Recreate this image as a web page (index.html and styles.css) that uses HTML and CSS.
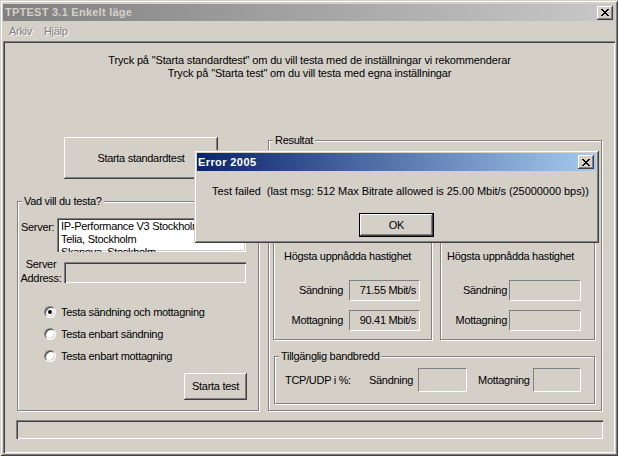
FILE: index.html
```html
<!DOCTYPE html>
<html lang="sv">
<head>
<meta charset="utf-8">
<title>TPTEST 3.1 Enkelt läge</title>
<link rel="stylesheet" href="styles.css">
</head>
<body>
<div class="window">
  <div class="titlebar inactive">
    <span class="title">TPTEST 3.1 Enkelt läge</span>
    <span class="capbtn"><svg width="8" height="7" viewBox="0 0 8 7" shape-rendering="crispEdges"><path fill="#000" d="M0 0h2v1H0zM6 0h2v1H6zM1 1h2v1H1zM5 1h2v1H5zM2 2h4v1H2zM3 3h2v1H3zM2 4h4v1H2zM1 5h2v1H1zM5 5h2v1H5zM0 6h2v1H0zM6 6h2v1H6z"/></svg></span>
  </div>
  <div class="menubar">
    <span class="menu">Arkiv</span>
    <span class="menu">Hjälp</span>
  </div>
  <div class="client">
    <div class="intro">
      <p>Tryck på "Starta standardtest" om du vill testa med de inställningar vi rekommenderar</p>
      <p>Tryck på "Starta test" om du vill testa med egna inställningar</p>
    </div>
    <div class="main">
      <div class="leftcol">
        <button class="btn btn-std">Starta standardtest</button>
        <fieldset class="group group-test">
          <legend>Vad vill du testa?</legend>
          <div class="server-row">
            <span class="server-label">Server:</span>
            <div class="listbox">
              <div class="item">IP-Performance V3 Stockholm</div>
              <div class="item">Telia, Stockholm</div>
              <div class="item">Skanova, Stockholm</div>
            </div>
          </div>
          <div class="addr-row">
            <span class="addr-label">Server<br>Address:</span>
            <div class="field field-addr"></div>
          </div>
          <div class="radios">
            <div class="radio"><span class="circle checked"></span><span>Testa sändning och mottagning</span></div>
            <div class="radio"><span class="circle"></span><span>Testa enbart sändning</span></div>
            <div class="radio"><span class="circle"></span><span>Testa enbart mottagning</span></div>
          </div>
          <div class="btnrow"><button class="btn btn-test">Starta test</button></div>
        </fieldset>
      </div>
      <fieldset class="group group-result">
        <legend>Resultat</legend>
        <div class="subgroups">
          <div class="subgroup sub-a">
            <div class="subhead">Högsta uppnådda hastighet</div>
            <div class="valrow"><span class="lbl">Sändning</span><span class="valbox">71.55 Mbit/s</span></div>
            <div class="valrow row2"><span class="lbl">Mottagning</span><span class="valbox">90.41 Mbit/s</span></div>
          </div>
          <div class="subgroup sub-b">
            <div class="subhead">Högsta uppnådda hastighet</div>
            <div class="valrow"><span class="lbl">Sändning</span><span class="valbox"></span></div>
            <div class="valrow row2"><span class="lbl">Mottagning</span><span class="valbox"></span></div>
          </div>
        </div>
        <fieldset class="group group-bw">
          <legend>Tillgänglig bandbredd</legend>
          <div class="bwrow">
            <span class="tcp">TCP/UDP i %:</span>
            <span class="bwlbl">Sändning</span>
            <span class="bwbox"></span>
            <span class="bwlbl bw-mot">Mottagning</span>
            <span class="bwbox bwbox-mot"></span>
          </div>
        </fieldset>
      </fieldset>
    </div>
    <div class="statusbar"></div>
  </div>
</div>

<div class="dialog">
  <div class="dlg-title">
    <span class="dlg-caption">Error 2005</span>
    <span class="capbtn"><svg width="8" height="7" viewBox="0 0 8 7" shape-rendering="crispEdges"><path fill="#000" d="M0 0h2v1H0zM6 0h2v1H6zM1 1h2v1H1zM5 1h2v1H5zM2 2h4v1H2zM3 3h2v1H3zM2 4h4v1H2zM1 5h2v1H1zM5 5h2v1H5zM0 6h2v1H0zM6 6h2v1H6z"/></svg></span>
  </div>
  <p class="dlg-text">Test failed&nbsp; (last msg: 512 Max Bitrate allowed is 25.00 Mbit/s (25000000 bps))</p>
  <div class="dlg-btns"><button class="btn btn-ok">OK</button></div>
</div>
</body>
</html>
```

FILE: styles.css
```css
* { box-sizing: border-box; }
html, body { margin: 0; padding: 0; }
body {
  width: 618px; height: 456px; overflow: hidden; position: relative;
  background: #d4d0c8; color: #000;
  font-family: "Liberation Sans", Arial, sans-serif;
  font-size: 11px; letter-spacing: -0.3px; line-height: 13px;
}
p { margin: 0; }

.window {
  width: 618px; height: 456px; padding: 4px 3px 3px 3px;
  display: flex; flex-direction: column; background: #d4d0c8;
  box-shadow: inset 1px 1px #d4d0c8, inset -1px -1px #404040, inset 2px 2px #fff, inset -2px -2px #808080;
}
.titlebar {
  height: 17px; flex: none; display: flex; align-items: center; justify-content: space-between;
  padding: 0 2px 0 2px;
}
.titlebar.inactive { background: linear-gradient(to right, #808080, #c8c8c8); color: #d4d0c8; }
.title { font-weight: bold; letter-spacing: 0.25px; }
.capbtn {
  width: 16px; height: 14px; background: #d4d0c8; display: flex; align-items: center; justify-content: center;
  box-shadow: inset -1px -1px #404040, inset 1px 1px #fff, inset -2px -2px #808080, inset 2px 2px #d4d0c8;
}
.menubar { height: 20px; flex: none; display: flex; align-items: center; padding-left: 0; }
.menu { padding: 0 6px; color: #808080; text-shadow: 1px 1px #fff; }

.client {
  flex: 1; padding: 13px 12px 0 13px;
  box-shadow: inset 1px 1px #808080, inset 2px 2px #404040, inset -1px -1px #fff, inset -2px -2px #d4d0c8;
}
.intro { text-align: center; letter-spacing: -0.15px; }

.main { display: flex; margin-top: 54px; height: 277px; }
.leftcol { width: 244px; display: flex; flex-direction: column; align-items: flex-start; }

.btn {
  font: inherit; letter-spacing: inherit; color: #000; background: #d4d0c8; border: 0; padding: 0;
  box-shadow: inset -1px -1px #404040, inset 1px 1px #fff, inset -2px -2px #808080, inset 2px 2px #d4d0c8;
}
.btn-std { margin: 3px 0 0 48px; width: 154px; height: 42px; }
.btn-test { width: 63px; height: 27px; }

.group {
  margin: 0; padding: 0; min-width: 0;
  border: 1px solid #808080;
  box-shadow: inset 1px 1px #fff, 1px 1px #fff;
}
.group > legend {
  margin-left: 4px; padding: 0 2px; background: #d4d0c8; line-height: 13px;
}
.group-test { margin: 16px 0 0 1px; width: 242px; height: 216px; }

.server-row { display: flex; align-items: flex-start; margin-top: 10px; padding-left: 3px; }
.server-label { width: 36px; margin-top: 3px; }
.listbox {
  width: 189px; height: 34px; background: #fff; overflow: hidden; padding: 2px 0 0 4px;
  box-shadow: inset 1px 1px #808080, inset 2px 2px #404040, inset -1px -1px #fff, inset -2px -2px #d4d0c8;
}
.item { white-space: nowrap; line-height: 13px; }

.addr-row { display: flex; align-items: flex-start; margin-top: 10px; }
.addr-label { width: 46px; text-align: center; line-height: 14px; margin-top: -5px; }
.field {
  background: #d4d0c8;
  box-shadow: inset 1px 1px #808080, inset 2px 2px #404040, inset -1px -1px #fff, inset -2px -2px #d4d0c8;
}
.field-addr { width: 182px; height: 21px; }

.radios { margin-top: 16px; }
.radio { display: flex; align-items: center; height: 22px; padding-left: 26px; }
.circle {
  width: 12px; height: 12px; border-radius: 50%; margin-right: 5px; position: relative;
  background: #fff; border: 1px solid; border-color: #808080 #fff #fff #808080;
  box-shadow: inset 1px 1px #404040, inset -1px -1px #d4d0c8;
}
.circle.checked::after {
  content: ""; position: absolute; left: 3px; top: 3px; width: 4px; height: 4px; border-radius: 50%; background: #000;
}
.btnrow { display: flex; justify-content: flex-end; margin-top: 6px; padding-right: 11px; }

.group-result { margin-left: 8px; width: 334px; height: 277px; }
.subgroups { display: flex; gap: 8px; margin: 12px 0 0 4px; }
.subgroup {
  height: 181px; border: 1px solid #808080;
  box-shadow: inset 1px 1px #fff, 1px 1px #fff;
}
.sub-a { width: 159px; }
.sub-b { width: 155px; }
.subhead { margin-top: 90px; white-space: nowrap; }
.sub-a .subhead { padding-left: 10px; }
.sub-b .subhead { padding-left: 6px; }
.valrow { display: flex; align-items: center; justify-content: flex-end; height: 21px; margin-top: 17px; }
.valrow.row2 { margin-top: 9px; }
.sub-a .valrow { padding-right: 11px; gap: 6px; }
.sub-b .valrow { padding-right: 13px; gap: 2px; }
.valbox {
  height: 21px; line-height: 19px; text-align: right; padding-right: 3px;
  border: 1px solid; border-color: #808080 #fff #fff #808080;
}
.sub-a .valbox { width: 71px; }
.sub-b .valbox { width: 72px; }

.group-bw { margin: 10px 0 0 5px; width: 321px; height: 54px; }
.bwrow { display: flex; align-items: center; height: 24px; margin-top: 5px; padding-left: 10px; }
.tcp { width: 84px; }
.bwbox {
  width: 49px; height: 24px; margin-left: 5px;
  border: 1px solid; border-color: #808080 #fff #fff #808080;
}
.bw-mot { margin-left: 11px; }
.bwbox-mot { width: 48px; margin-left: 3px; }

.statusbar {
  height: 19px; margin-top: 9px;
  box-shadow: inset 1px 1px #808080, inset 2px 2px #404040, inset -1px -1px #fff, inset -2px -2px #d4d0c8;
}

.dialog {
  position: absolute; left: 194px; top: 150px; width: 405px; height: 93px; padding: 3px;
  background: #d4d0c8;
  box-shadow: inset 1px 1px #d4d0c8, inset -1px -1px #404040, inset 2px 2px #fff, inset -2px -2px #808080;
}
.dlg-title {
  height: 18px; display: flex; align-items: center; justify-content: space-between; padding: 0 2px 0 1px;
  background: linear-gradient(to right, #0a246a, #a6caf0); color: #fff;
}
.dlg-caption { font-weight: bold; letter-spacing: 0.4px; }
.dlg-text { margin-top: 14px; padding-left: 15px; white-space: nowrap; letter-spacing: -0.06px; }
.dlg-btns { display: flex; justify-content: center; margin-top: 15px; }
.btn-ok {
  width: 75px; height: 24px; border: 1px solid #000;
  box-shadow: inset -1px -1px #404040, inset 1px 1px #fff, inset -2px -2px #808080, inset 2px 2px #d4d0c8;
}
```
